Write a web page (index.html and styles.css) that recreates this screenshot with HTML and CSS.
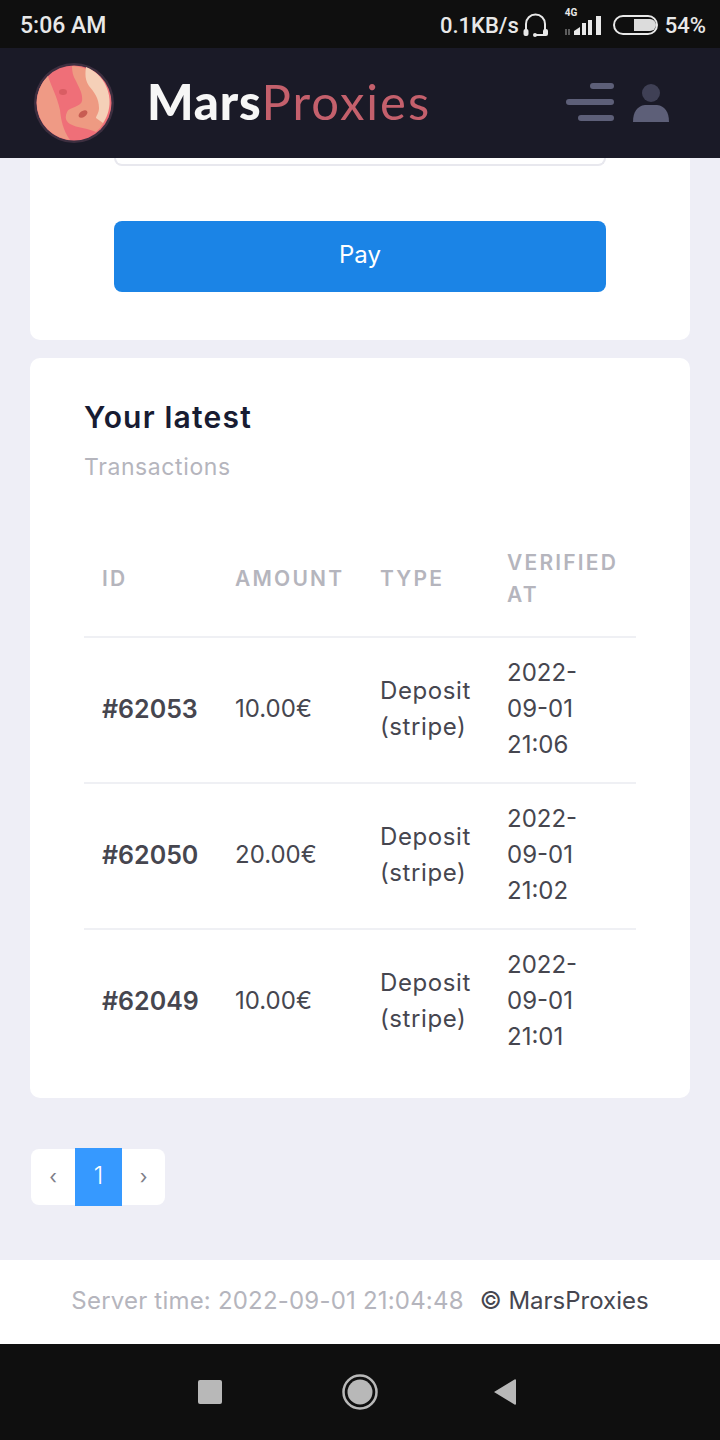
FILE: index.html
```html
<!DOCTYPE html>
<html lang="en">
<head>
  <meta charset="UTF-8" />
  <meta name="viewport" content="width=device-width, initial-scale=1.0" />
  <title>MarsProxies</title>
  <link rel="stylesheet" href="styles.css">
</head>
<body>
  <!-- Phone status bar -->
  <div class="status-bar">
    <span class="clock">5:06 AM</span>
    <div class="status-right">
      <span class="speed">0.1KB/s</span>
      <svg class="headset" width="26" height="24" viewBox="0 0 26 24">
        <path d="M3 19V11a9.5 9.5 0 0 1 19 0v8" fill="none" stroke="#e8e8e8" stroke-width="2"/>
        <rect x="0.500" y="16" width="5" height="7" rx="2" fill="#e8e8e8"/>
        <rect x="20" y="16" width="5" height="7" rx="2" fill="#e8e8e8"/>
        <path d="M12 22h11" stroke="#e8e8e8" stroke-width="2"/>
        <circle cx="12" cy="22" r="2" fill="#e8e8e8"/>
      </svg>
      <div class="signal">
        <span class="net">4G</span>
        <svg width="40" height="22" viewBox="0 0 40 22">
          <path d="M3 15v6M6 15v6" stroke="#777" stroke-width="1.500"/>
          <path d="M11 21v-4l6-4v8z" fill="#e8e8e8"/>
          <rect x="19" y="9" width="4" height="12" fill="#e8e8e8"/>
          <rect x="25" y="6" width="4" height="15" fill="#e8e8e8"/>
          <rect x="33" y="2" width="5" height="19" fill="#e8e8e8"/>
        </svg>
      </div>
      <svg class="battery" width="46" height="20" viewBox="0 0 46 20">
        <rect x="1" y="1" width="43" height="18" rx="9" fill="none" stroke="#e8e8e8" stroke-width="2"/>
        <path d="M21 4h16a6 6 0 0 1 0 12H21z" fill="#dcdcdc"/>
      </svg>
      <span class="percent">54%</span>
    </div>
  </div>

  <!-- Site header -->
  <header class="site-header">
    <div class="brand">
      <svg class="planet" width="82" height="82" viewBox="0 0 82 82">
        <circle cx="41" cy="41" r="40" fill="#3d2f40"/>
        <circle cx="41" cy="41" r="37.500" fill="#ef6f78"/>
        <path d="M15 14C18 24 24 34 27 48c1 10 3 20 10 30A37.500 37.500 0 0 1 15 14z" fill="#ef9a85"/>
        <path d="M39 4c0 6 1 10 4 15 3 7 7 12 6 20-1 6-13 6-15 11-2 5-2 9 3 12 7 4 18 4 26 8A37.500 37.500 0 0 0 39 4z" fill="#ee9a82"/>
        <path d="M53 5c-1 7-1 13 3 19 5 6 10 12 10 22 0 5-3 8-3 10l7 5A37.500 37.500 0 0 0 53 5z" fill="#f5d0b8"/>
        <ellipse cx="50" cy="52" rx="5" ry="3" fill="#c85c52" transform="rotate(-35 50 52)"/>
        <ellipse cx="30" cy="30" rx="4" ry="3" fill="#d95d63"/>
      </svg>
      <span class="brand-name"><span class="brand-mars">Mars</span><span class="brand-proxies">Proxies</span></span>
    </div>
    <div class="header-icons">
      <svg width="50" height="40" viewBox="0 0 50 40">
        <rect x="24" y="0" width="24" height="6" rx="3" fill="#5d5f78"/>
        <rect x="0" y="16" width="48" height="6" rx="3" fill="#5d5f78"/>
        <rect x="12" y="32" width="36" height="6" rx="3" fill="#5d5f78"/>
      </svg>
      <svg width="38" height="38" viewBox="0 0 38 38">
        <circle cx="19" cy="9" r="9" fill="#3f4055"/>
        <path d="M1 38c0-10 4-16 12-17h12c8 1 12 7 12 17z" fill="#5d5f78"/>
      </svg>
    </div>
  </header>

  <main class="content">
    <section class="card pay-card">
      <div class="input-stub"></div>
      <button class="pay-btn">Pay</button>
    </section>

    <section class="card tx-card">
      <h3 class="tx-title">Your latest</h3>
      <p class="tx-sub">Transactions</p>
      <table class="tx-table">
        <thead>
          <tr>
            <th class="col-id">ID</th>
            <th class="col-amount">Amount</th>
            <th class="col-type">Type</th>
            <th class="col-date">Verified at</th>
          </tr>
        </thead>
        <tbody>
          <tr>
            <td class="tx-id">#62053</td>
            <td>10.00€</td>
            <td class="tx-type">Deposit (stripe)</td>
            <td>2022-<br>09-01<br>21:06</td>
          </tr>
          <tr>
            <td class="tx-id">#62050</td>
            <td>20.00€</td>
            <td class="tx-type">Deposit (stripe)</td>
            <td>2022-<br>09-01<br>21:02</td>
          </tr>
          <tr>
            <td class="tx-id">#62049</td>
            <td>10.00€</td>
            <td class="tx-type">Deposit (stripe)</td>
            <td>2022-<br>09-01<br>21:01</td>
          </tr>
        </tbody>
      </table>
    </section>

    <nav class="pagination">
      <span class="page-arrow">‹</span>
      <span class="page-current">1</span>
      <span class="page-arrow">›</span>
    </nav>
  </main>

  <footer class="site-footer">
    <span class="server-time">Server time: 2022-09-01 21:04:48</span>
    <span class="copy">© MarsProxies</span>
  </footer>

  <!-- Phone nav buttons -->
  <div class="nav-bar">
    <svg width="24" height="24" viewBox="0 0 24 24"><rect width="24" height="24" rx="2" fill="#b8b8b8"/></svg>
    <svg width="36" height="36" viewBox="0 0 36 36">
      <circle cx="18" cy="18" r="16.500" fill="none" stroke="#b8b8b8" stroke-width="2.500"/>
      <circle cx="18" cy="18" r="12.500" fill="#b8b8b8"/>
    </svg>
    <svg class="nav-back" width="24" height="26" viewBox="0 0 24 26"><path d="M23 1v24a1 1 0 0 1-1.500.5L1 13 21.500.5A1 1 0 0 1 23 1z" fill="#b8b8b8"/></svg>
  </div>
</body>
</html>
```

FILE: styles.css
```css
* {
  box-sizing: border-box;
}

body {
  margin: 0;
  width: 720px;
  height: 1440px;
  overflow: hidden;
  font-family: "Inter", "Liberation Sans", sans-serif;
  background: #eeeef6;
  color: #46464f;
  display: flex;
  flex-direction: column;
}

.status-bar {
  height: 48px;
  background: #0f0f0f;
  color: #e8e8e8;
  display: flex;
  justify-content: space-between;
  align-items: center;
  padding: 2px 14px 0 20px;
  font-family: "Roboto", sans-serif;
  font-weight: 500;
  font-size: 22px;
}

.clock {
  font-size: 23px;
}

.status-right {
  display: flex;
  align-items: center;
}

.headset {
  margin-left: 4px;
}

.signal {
  position: relative;
  margin-left: 14px;
  width: 40px;
  height: 22px;
}

.signal svg {
  display: block;
}

.net {
  position: absolute;
  left: 2px;
  top: -7px;
  font-size: 10px;
  font-weight: 700;
}

.battery {
  margin-left: 10px;
}

.percent {
  margin-left: 6px;
}

.site-header {
  height: 110px;
  background: #1a1a27;
  display: flex;
  justify-content: space-between;
  align-items: center;
  padding: 0 50px 0 33px;
}

.brand {
  display: flex;
  align-items: center;
  gap: 32px;
}

.planet {
  display: block;
}

.brand-name {
  font-family: "Lato", sans-serif;
  font-size: 49px;
  line-height: 50px;
  letter-spacing: 2px;
  padding-bottom: 4px;
}

.brand-mars {
  color: #f6f6f6;
  font-weight: 900;
  letter-spacing: 0.800px;
}

.brand-proxies {
  color: #c4606c;
  font-weight: 400;
}

.header-icons {
  display: flex;
  align-items: center;
  gap: 16px;
}

.content {
  flex: 1;
  padding: 0 30px;
  display: flex;
  flex-direction: column;
}

.card {
  background: #fff;
  border-radius: 10px;
}

.pay-card {
  height: 182px;
  padding: 0 84px;
  border-top-left-radius: 0;
  border-top-right-radius: 0;
}

.input-stub {
  height: 8px;
  border: 2px solid #e8e8ee;
  border-top: 0;
  border-radius: 0 0 10px 10px;
}

.pay-btn {
  display: block;
  width: 100%;
  height: 71px;
  margin-top: 55px;
  padding: 0 0 4px;
  border: 0;
  border-radius: 8px;
  background: #1b84e6;
  color: #fff;
  font-family: inherit;
  font-size: 24px;
}

.tx-card {
  margin-top: 18px;
  height: 740px;
  padding: 40px 54px 0;
}

.tx-title {
  margin: 0;
  font-size: 30px;
  line-height: 38px;
  font-weight: 600;
  letter-spacing: 1.200px;
  color: #181c32;
}

.tx-sub {
  margin: 16px 0 0;
  font-size: 23px;
  line-height: 30px;
  letter-spacing: 0.600px;
  color: #b5b5bd;
}

.tx-table {
  width: 552px;
  margin-top: 39px;
  border-collapse: collapse;
  table-layout: fixed;
}

.col-id {
  width: 133px;
}

.col-amount {
  width: 145px;
}

.col-type {
  width: 127px;
}

.tx-table th {
  height: 116px;
  padding: 0 18px;
  text-align: left;
  vertical-align: middle;
  font-size: 21px;
  line-height: 32px;
  font-weight: 600;
  letter-spacing: 2.200px;
  text-transform: uppercase;
  color: #b5b5bd;
}

.tx-table td {
  height: 146px;
  padding: 0 18px 2px;
  border-top: 2px solid #eff0f4;
  font-size: 24px;
  line-height: 36px;
  vertical-align: middle;
}

.tx-table tbody tr:last-child td {
  padding-bottom: 4px;
}

.tx-table td.tx-id {
  font-weight: 600;
  font-size: 25px;
}

.tx-table td.tx-type {
  letter-spacing: 0.600px;
}

.pagination {
  display: flex;
  align-items: center;
  align-self: flex-start;
  margin: 50px 0 0 1px;
  height: 58px;
  font-size: 20px;
}

.page-arrow {
  width: 44px;
  height: 56px;
  background: #fff;
  color: #7e7e88;
  display: flex;
  align-items: center;
  justify-content: center;
}

.page-arrow:first-child {
  border-radius: 8px 0 0 8px;
}

.page-arrow:last-child {
  width: 43px;
  border-radius: 0 8px 8px 0;
}

.page-current {
  width: 47px;
  height: 58px;
  padding-bottom: 4px;
  background: #3699ff;
  color: #fff;
  display: flex;
  align-items: center;
  justify-content: center;
  font-size: 24px;
  font-weight: 300;
}

.site-footer {
  height: 84px;
  padding-bottom: 4px;
  background: #fff;
  display: flex;
  justify-content: center;
  align-items: center;
  gap: 16px;
  font-size: 24px;
}

.server-time {
  color: #b5b5bd;
  letter-spacing: 0.200px;
}

.nav-bar {
  height: 96px;
  background: #0f0f0f;
  display: flex;
  align-items: center;
  gap: 120px;
  padding-left: 198px;
}

.nav-back {
  margin-left: -5px;
}
```
